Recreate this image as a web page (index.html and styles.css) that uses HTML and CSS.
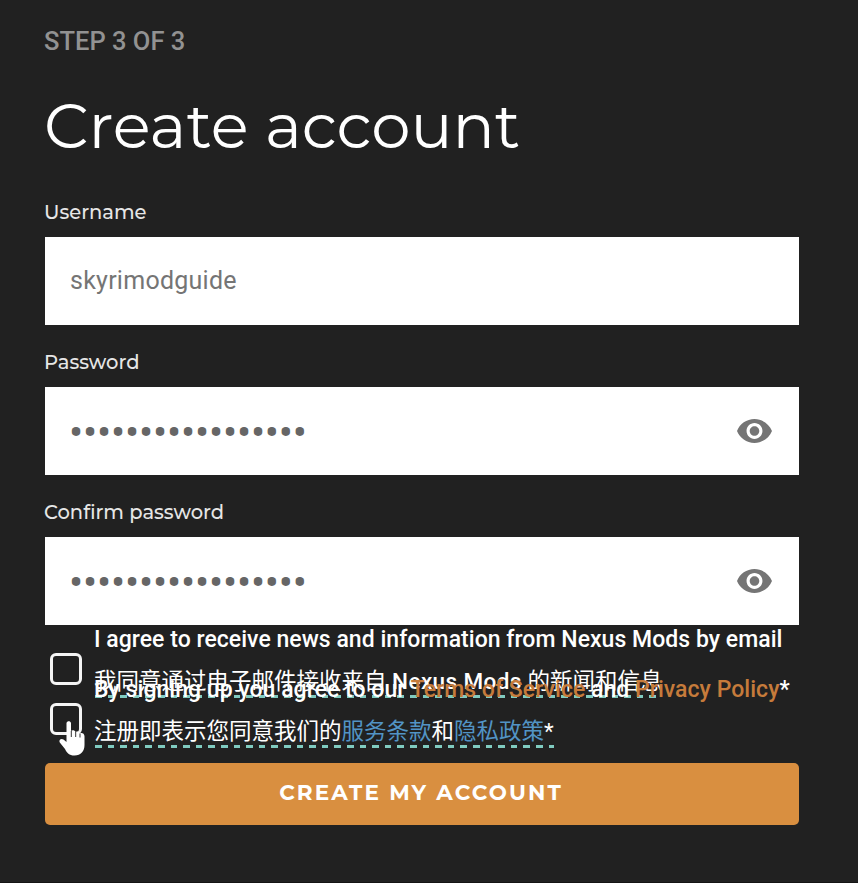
FILE: index.html
```html
<!DOCTYPE html>
<html lang="en">
<head>
<meta charset="utf-8">
<title>Create account</title>
<link rel="stylesheet" href="styles.css">
</head>
<body>
<main class="signup">
  <p class="step">STEP 3 OF 3</p>
  <h1 class="title"><span>Create account</span></h1>
  <form class="form">
    <div class="field">
      <label class="field-label">Username</label>
      <div class="control"><span class="value">skyrimodguide</span></div>
    </div>
    <div class="field">
      <label class="field-label">Password</label>
      <div class="control">
        <span class="dots">•••••••••••••••••</span>
        <svg class="eye" viewBox="1 4.5 22 15"><path d="M12 4.5C7 4.5 2.73 7.61 1 12c1.73 4.39 6 7.5 11 7.5s9.27-3.11 11-7.5c-1.73-4.39-6-7.5-11-7.5zM12 17c-2.76 0-5-2.24-5-5s2.24-5 5-5 5 2.24 5 5-2.24 5-5 5zm0-8c-1.66 0-3 1.34-3 3s1.34 3 3 3 3-1.34 3-3-1.34-3-3-3z"/></svg>
      </div>
    </div>
    <div class="field">
      <label class="field-label">Confirm password</label>
      <div class="control">
        <span class="dots">•••••••••••••••••</span>
        <svg class="eye" viewBox="1 4.5 22 15"><path d="M12 4.5C7 4.5 2.73 7.61 1 12c1.73 4.39 6 7.5 11 7.5s9.27-3.11 11-7.5c-1.73-4.39-6-7.5-11-7.5zM12 17c-2.76 0-5-2.24-5-5s2.24-5 5-5 5 2.24 5 5-2.24 5-5 5zm0-8c-1.66 0-3 1.34-3 3s1.34 3 3 3 3-1.34 3-3-1.34-3-3-3z"/></svg>
      </div>
    </div>
    <div class="consent">
      <span class="checkbox"></span>
      <div class="consent-text">
        <p class="line">I agree to receive news and information from Nexus Mods by email</p>
        <p class="line line-translated"><span class="translated">我同意通过电子邮件接收来自 <span class="brand">Nexus Mods</span> 的新闻和信息</span></p>
      </div>
    </div>
    <div class="consent">
      <span class="checkbox"><svg class="pointer" viewBox="0 0 26 35"><path d="M7.500 2C8-.3 11.500-.3 12 2V10C13.500 8.800 16 9.300 16.500 11C18 9.800 20.600 10.500 21 12.300C22.700 11.300 25.500 12.300 25.500 15.300V24C25.500 30 22 34.500 15.500 34.500C10 34.500 8 32 6 28L.8 21.500C-.5 19 2 17 4.500 18.500L7.500 21V2Z"/><path class="crease" d="M12.300 10v6M16.700 11v5M21 12.500v4"/></svg></span>
      <div class="consent-text">
        <p class="line">By signing up you agree to our <a class="link">Terms of Service</a> and <a class="link">Privacy Policy</a>*</p>
        <p class="line line-translated"><span class="translated">注册即表示您同意我们的<a class="link-alt">服务条款</a>和<a class="link-alt">隐私政策</a>*</span></p>
      </div>
    </div>
    <button class="submit" type="button">CREATE MY ACCOUNT</button>
  </form>
</main>
</body>
</html>
```
FILE: styles.css
```css
* { box-sizing: border-box; }
body {
  margin: 0;
  background: #212121;
  color: #fff;
  font-family: Roboto, "Noto Sans CJK SC", sans-serif;
}
.signup {
  width: 858px;
  height: 883px;
  padding: 24px 59px 0 45px;
  border-bottom: 1px solid #141414;
  overflow: hidden;
}
p, h1 { margin: 0; }
.step {
  height: 34px;
  margin-left: -1px;
  line-height: 34px;
  font-size: 25.5px;
  font-weight: 500;
  color: #929292;
  white-space: nowrap;
}
.title {
  height: 92px;
  margin: 22px 0 0 -1px;
  line-height: 91px;
  font-family: Montserrat, Inter, sans-serif;
  font-size: 62.6px;
  font-weight: 400;
  white-space: nowrap;
}
.field { height: 150px; }
.form { margin-top: 25px; }
.field-label {
  display: block;
  height: 40px;
  margin-left: -1px;
  line-height: 30px;
  font-family: Montserrat, Inter, sans-serif;
  font-size: 19.5px;
  font-weight: 500;
  color: #e6e6e6;
}
.control {
  display: flex;
  align-items: center;
  justify-content: space-between;
  height: 88px;
  padding: 0 27px 0 25px;
  background: #fff;
  color: #757575;
}
.value { font-size: 25px; letter-spacing: .25px; line-height: 36px; }
.dots { font-size: 42px; letter-spacing: -.18px; color: #666; line-height: 40px; margin: 3px 0 0 -1px; }
.eye { width: 35px; height: 24px; fill: #757575; }
.consent {
  display: flex;
  height: 50px;
  padding-left: 5px;
}
.form .field:nth-child(3) { height: 128px; }
.checkbox {
  position: relative;
  flex: none;
  width: 32px;
  height: 32px;
  margin: 28px 12px 0 0;
  border: 3px solid #f4f4f4;
  border-radius: 6px;
}
.consent-text { margin-top: -7px; height: 84px; }
.line {
  height: 42px;
  line-height: 44px;
  font-size: 23px;
  font-weight: 500;
  letter-spacing: .035px;
  white-space: nowrap;
}
.line-translated { line-height: 42px; }
.translated {
  display: inline-block;
  height: 38px;
  line-height: 43px;
  font-size: 22.5px;
  font-weight: 400;
  letter-spacing: 0;
  background: repeating-linear-gradient(90deg, #80cbc0 0 6.6px, transparent 6.6px 12.6px) 1px 100% / 100% 3px no-repeat;
}
.brand { font-weight: 500; letter-spacing: .4px; }
.link { color: #c67b3b; }
.link-alt { color: #5294c5; }
.pointer {
  position: absolute;
  left: 6px;
  top: 15px;
  width: 26px;
  height: 35px;
  fill: #fff;
}
.crease { fill: none; stroke: #333; stroke-width: 1; }
.submit {
  display: block;
  width: 100%;
  height: 62px;
  margin-top: 38px;
  padding: 0 2px 4px 0;
  border: 0;
  border-radius: 5px;
  background: #d98f40;
  color: #fff;
  font-family: Montserrat, Inter, sans-serif;
  font-size: 21.5px;
  font-weight: 700;
  letter-spacing: 2.1px;
}
```
